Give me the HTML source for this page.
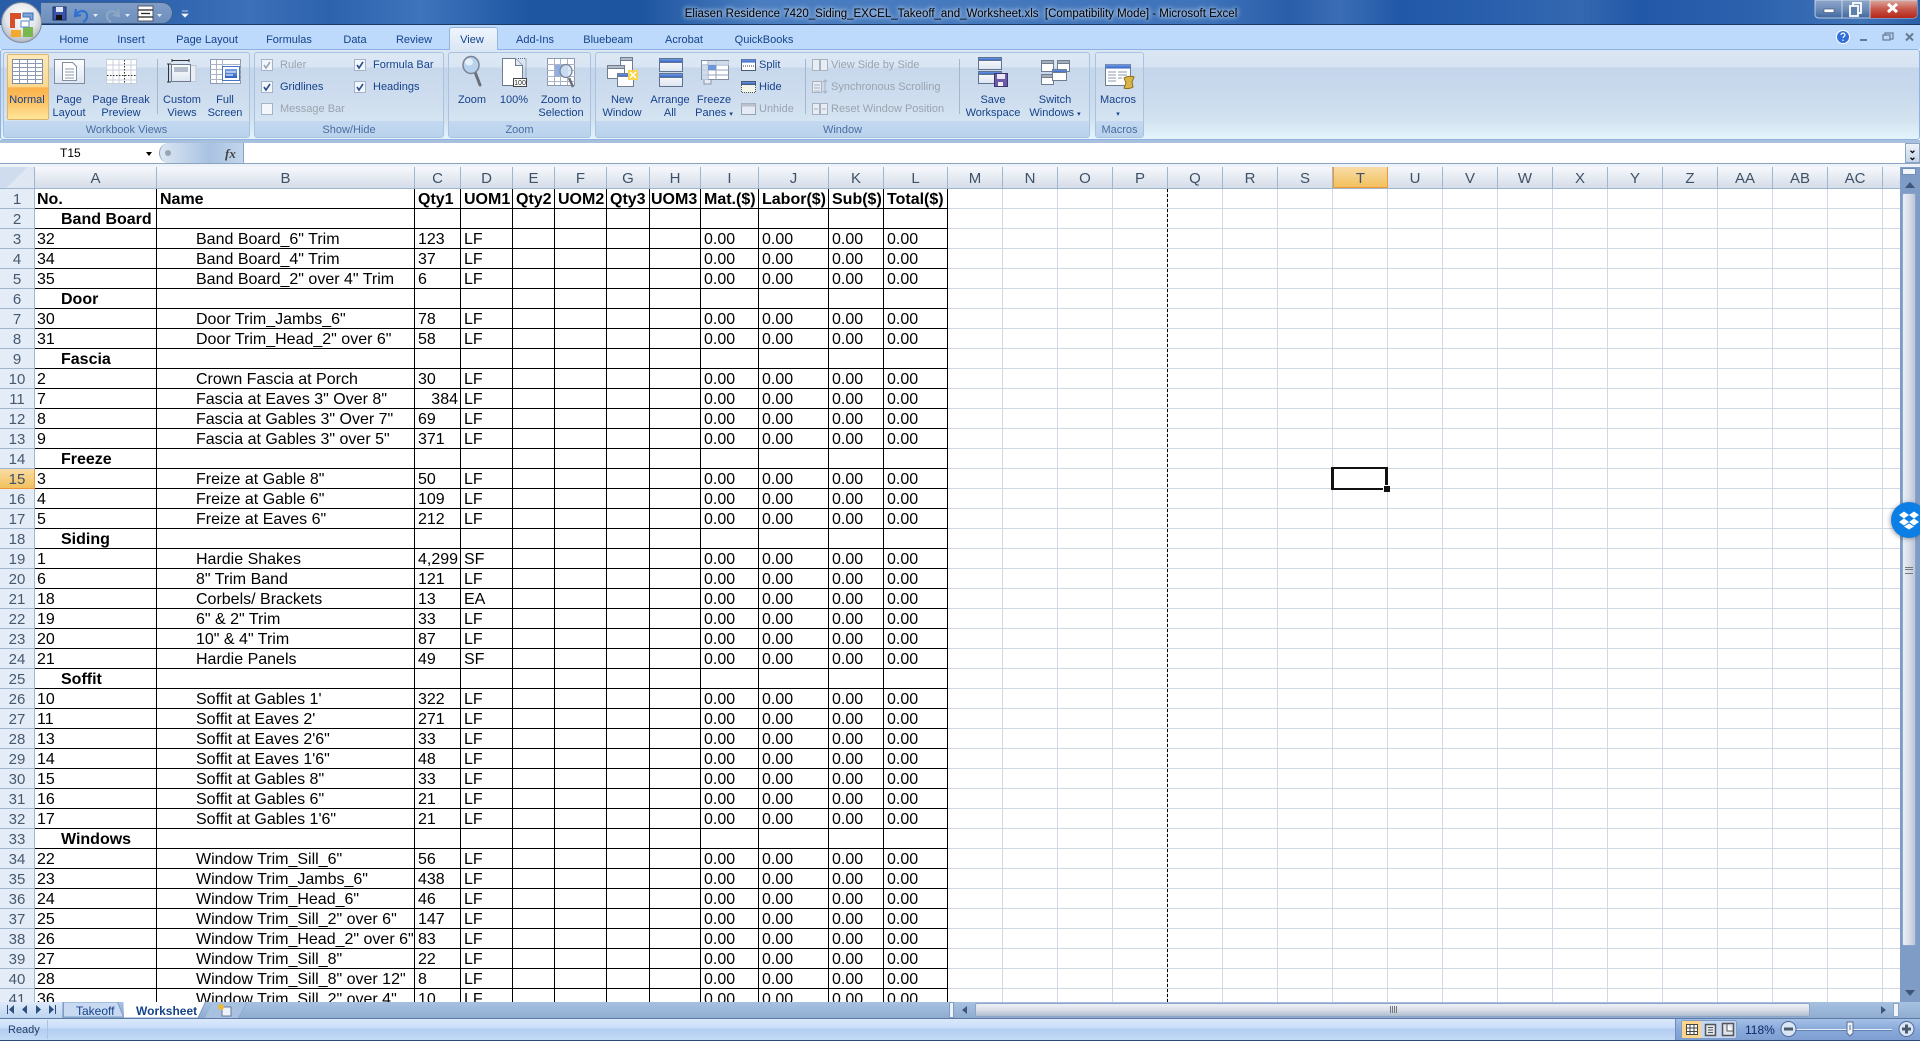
<!DOCTYPE html>
<html><head><meta charset="utf-8"><title>Excel</title>
<style>
html,body{margin:0;padding:0;background:#fff}
#p{position:relative;width:1920px;height:1041px;overflow:hidden;font-family:"Liberation Sans",sans-serif;font-size:11px;color:#15428b}
.a{position:absolute}
.l{position:absolute;transform:translateX(-50%);text-align:center;line-height:13px;white-space:nowrap;margin-top:1px}
.x{position:absolute;line-height:13px;white-space:nowrap;margin-top:1px}
.d{color:#9aa3af}
.g{position:absolute;top:52px;height:84px;border:1px solid #a9c2de;border-radius:3px;background:rgba(255,255,255,.08);box-sizing:content-box}
.gl{position:absolute;left:0;right:0;bottom:0;height:16px;background:linear-gradient(#c4d9f1,#b9d2ec);color:#4a6da0;text-align:center;line-height:18px}
#ch{position:absolute;left:0;top:167px;height:21px;width:1900px;overflow:hidden;display:flex;background:linear-gradient(#f6f8fc,#d5dde9);border-top:0;border-bottom:1px solid #9eb6ce}
#ch span{display:block;flex:none;box-sizing:border-box;height:21px;border-right:1px solid #9eb6ce;text-align:center;font-size:15px;line-height:23px;color:#3f5166}
#ch .o{background:linear-gradient(#f9dca6,#f1c15c);border-right:1px solid #f29536;border-left:1px solid #f29536;border-bottom:1px solid #f29536;color:#3f5166}
#rh{position:absolute;left:0;top:189px;width:35px;height:813px;overflow:hidden}
#rh div{box-sizing:border-box;height:20px;width:35px;background:#e4ecf7;border-right:1px solid #9eb6ce;border-bottom:1px solid #9eb6ce;text-align:center;font-size:15px;line-height:22px;color:#46586e}
#rh .o{background:linear-gradient(#f9dca6,#f1c15c);color:#3f5166;border-right:1px solid #f29536;border-bottom:1px solid #f29536}
#gr{position:absolute;left:948px;top:189px;width:952px;height:813px;background-image:repeating-linear-gradient(90deg,transparent 0 54px,#d0d7e5 54px 55px),repeating-linear-gradient(180deg,transparent 0 19px,#d0d7e5 19px 20px)}
#tw{position:absolute;left:35px;top:189px;width:913px;height:813px;overflow:hidden}
table{border-collapse:separate;border-spacing:0;table-layout:fixed;width:913px;font-size:16px;color:#000}
td{box-sizing:border-box;height:20px;padding:2px 0 0 3px;border-right:1px solid #000;border-bottom:1px solid #000;white-space:nowrap;overflow:hidden;line-height:17px;vertical-align:top}
.n{padding-left:39px}.s{padding-left:26px;font-weight:bold}.b{font-weight:bold}.r{text-align:right;padding-right:2px}
tr td:first-child{padding-left:2px}tr td.s:first-child{padding-left:26px}
</style></head><body><div id="p">

<!-- title bar -->
<div class="a" style="left:0;top:0;width:1920px;height:24px;background:linear-gradient(90deg,#2a5da8 0,#2b60ab 130px,#3c70b8 250px,#2d62ad 330px,#3e74bb 420px,#1f56a2 530px,#1e55a0 640px,#4a7dc0 760px,#3f73ba 1200px,#2a5ea9 1290px,#3a6db4 1340px,#2158a8 1400px,#2a60ad 1500px,#3468b0 1580px,#2258a8 1640px,#2d62ae 1760px,#3f74b8 1860px,#2a5fa8 1920px)"></div>
<div class="a" style="left:0;top:24px;width:1920px;height:1px;background:#1b3a63"></div>
<div class="a" style="left:41px;top:2px;width:132px;height:22px;border-radius:0 12px 12px 0;background:linear-gradient(#7f9dc6,#6d8fbd);border:1px solid #3d5f90;border-left:0;box-sizing:border-box"></div>
<div class="x" style="left:961px;top:7px;transform:translateX(-50%);font-size:11.5px;color:#000;text-shadow:0 0 4px #dbe8f8,0 0 6px #dbe8f8">Eliasen Residence 7420_Siding_EXCEL_Takeoff_and_Worksheet.xls &nbsp;[Compatibility Mode] - Microsoft Excel</div>

<!-- tab strip -->
<div class="a" style="left:0;top:25px;width:1920px;height:24px;background:#bdd9fc"></div>
<!-- ribbon -->
<div class="a" style="left:0;top:49px;width:1920px;height:91px;box-sizing:border-box;border:1px solid #8db2e3;border-radius:3px;background:linear-gradient(#dbe6f4 0,#d6e3f2 17px,#c4d5eb 18px,#c9daed 45px,#d2e2f0 70px,#e2f3fc 88px)"></div>
<div class="a" style="left:0;top:140px;width:1920px;height:3px;background:#a8c0dc"></div>
<div class="a" style="left:449px;top:27px;width:49px;height:23px;box-sizing:border-box;border:1px solid #93b5e0;border-bottom:0;border-radius:3px 3px 0 0;background:linear-gradient(#eef5fd,#dce7f5)"></div>
<div class="l" style="left:74px;top:33px">Home</div>
<div class="l" style="left:131px;top:33px">Insert</div>
<div class="l" style="left:207px;top:33px">Page Layout</div>
<div class="l" style="left:289px;top:33px">Formulas</div>
<div class="l" style="left:355px;top:33px">Data</div>
<div class="l" style="left:414px;top:33px">Review</div>
<div class="l" style="left:472px;top:33px">View</div>
<div class="l" style="left:535px;top:33px">Add-Ins</div>
<div class="l" style="left:608px;top:33px">Bluebeam</div>
<div class="l" style="left:684px;top:33px">Acrobat</div>
<div class="l" style="left:764px;top:33px">QuickBooks</div>

<!-- groups -->
<div class="g" style="left:3px;width:245px"><div class="gl">Workbook Views</div></div>
<div class="g" style="left:254px;width:188px"><div class="gl">Show/Hide</div></div>
<div class="g" style="left:448px;width:141px"><div class="gl">Zoom</div></div>
<div class="g" style="left:595px;width:493px"><div class="gl">Window</div></div>
<div class="g" style="left:1095px;width:47px"><div class="gl">Macros</div></div>
<div class="a" style="left:7px;top:54px;width:42px;height:66px;box-sizing:border-box;border:1px solid #e0b36a;border-radius:2px;background:linear-gradient(#fde9b8 0,#fbd88e 50%,#fbb14a 51%,#fcc468 75%,#fee79a 100%)"></div>

<!-- ribbon labels -->
<div class="l" style="left:27px;top:93px">Normal</div>
<div class="l" style="left:69px;top:93px">Page<br>Layout</div>
<div class="l" style="left:121px;top:93px">Page Break<br>Preview</div>
<div class="l" style="left:182px;top:93px">Custom<br>Views</div>
<div class="l" style="left:225px;top:93px">Full<br>Screen</div>
<div class="x d" style="left:280px;top:58px">Ruler</div>
<div class="x" style="left:280px;top:80px">Gridlines</div>
<div class="x d" style="left:280px;top:102px">Message Bar</div>
<div class="x" style="left:373px;top:58px">Formula Bar</div>
<div class="x" style="left:373px;top:80px">Headings</div>
<div class="l" style="left:472px;top:93px">Zoom</div>
<div class="l" style="left:514px;top:93px">100%</div>
<div class="l" style="left:561px;top:93px">Zoom to<br>Selection</div>
<div class="l" style="left:622px;top:93px">New<br>Window</div>
<div class="l" style="left:670px;top:93px">Arrange<br>All</div>
<div class="l" style="left:714px;top:93px">Freeze<br>Panes <span style="font-size:7px">▾</span></div>
<div class="x" style="left:759px;top:58px">Split</div>
<div class="x" style="left:759px;top:80px">Hide</div>
<div class="x d" style="left:759px;top:102px">Unhide</div>
<div class="x d" style="left:831px;top:58px">View Side by Side</div>
<div class="x d" style="left:831px;top:80px">Synchronous Scrolling</div>
<div class="x d" style="left:831px;top:102px">Reset Window Position</div>
<div class="l" style="left:993px;top:93px">Save<br>Workspace</div>
<div class="l" style="left:1055px;top:93px">Switch<br>Windows <span style="font-size:7px">▾</span></div>
<div class="l" style="left:1118px;top:93px">Macros<br><span style="font-size:7px">▾</span></div>

<!-- icons -->
<svg class="a" style="left:0;top:0" width="1920" height="141" viewBox="0 0 1920 141">
<defs>
<radialGradient id="ob" cx=".5" cy=".35" r=".7"><stop offset="0" stop-color="#ffffff"/><stop offset=".55" stop-color="#e3e6ea"/><stop offset="1" stop-color="#a7afb9"/></radialGradient>
<linearGradient id="pg" x1="0" y1="0" x2="0" y2="1"><stop offset="0" stop-color="#fff"/><stop offset="1" stop-color="#dde5f1"/></linearGradient>
<linearGradient id="bl" x1="0" y1="0" x2="0" y2="1"><stop offset="0" stop-color="#7aa3e6"/><stop offset="1" stop-color="#2f5fc4"/></linearGradient>
<linearGradient id="cl" x1="0" y1="0" x2="0" y2="1"><stop offset="0" stop-color="#dba79b"/><stop offset=".5" stop-color="#c8564a"/><stop offset="1" stop-color="#b5261a"/></linearGradient>
<linearGradient id="wb" x1="0" y1="0" x2="0" y2="1"><stop offset="0" stop-color="#8ea7cc"/><stop offset=".5" stop-color="#6f8cb8"/><stop offset="1" stop-color="#3f679f"/></linearGradient>
</defs>
<!-- office button -->
<circle cx="21.5" cy="22.5" r="20" fill="url(#ob)" stroke="#7f8a99"/>
<path d="M10 13h11v6h-6v9h-5z" fill="#d8502a"/><path d="M23 13h10v7h-3v-3h-7z" fill="#7ea6d8" stroke="#3d72b8"/>
<path d="M11 30h10v7h-10z" fill="#f3a92c"/><path d="M23 27h10v10h-10z" fill="#79b84f"/>
<rect x="21" y="21" width="8" height="6" fill="#fff" stroke="#5b8ac8"/>
<!-- QAT -->
<rect x="53" y="7" width="13" height="13" fill="#3b53a8" stroke="#1e2f6e"/><rect x="56" y="7" width="7" height="5" fill="#dfe6f5"/><rect x="56" y="15" width="6" height="5" fill="#111"/>
<path d="M76 9l-1 7 6-1M76 15c3-6 12-5 11 2-.3 2-2 4-4 5" fill="none" stroke="#2f6fd0" stroke-width="2.2"/>
<path d="M93 14h5l-2.500 3z" fill="#e6edf7"/>
<path d="M118 9l1 7-6-1M118 15c-3-6-12-5-11 2 .3 2 2 4 4 5" fill="none" stroke="#8ea6c6" stroke-width="2.200"/>
<path d="M125 14h5l-2.500 3z" fill="#e6edf7"/>
<rect x="138" y="6" width="15" height="15" fill="#fff" stroke="#556"/><path d="M138 10h15M138 17h15M141 13.500h9" stroke="#222" stroke-width="1.300"/>
<path d="M157 14h5l-2.500 3z" fill="#e6edf7"/>
<path d="M182 11h6M182 14h6l-3 3z" fill="#fff" stroke="#e8eef7" stroke-width=".8"/>
<!-- window buttons -->
<path d="M1815 0v14q0 4 4 4h94q4 0 4-4V0z" fill="url(#wb)" stroke="#e8eef7" stroke-opacity=".7"/>
<path d="M1870 .5h47v13.500q0 4-4 4h-43z" fill="url(#cl)"/>
<path d="M1842 0v18M1870 0v18" stroke="#e8eef7" stroke-opacity=".7"/>
<rect x="1824" y="9" width="10" height="3.500" fill="#fff" stroke="#39506f" stroke-width=".6"/>
<rect x="1853" y="3" width="8" height="10" fill="none" stroke="#fff" stroke-width="1.800"/><rect x="1850" y="6" width="8" height="10" fill="#5e7fae" stroke="#fff" stroke-width="1.800"/>
<path d="M1888 4l9 8M1897 4l-9 8" stroke="#fff" stroke-width="3"/>
<!-- help etc -->
<circle cx="1843" cy="37" r="6.500" fill="#2f6fd8" stroke="#fff"/><path d="M1841 35c0-2.500 4-2.500 4 0 0 1.500-2 1.500-2 3M1843 39.500v1.500" stroke="#fff" fill="none" stroke-width="1.200"/>
<rect x="1860" y="39" width="7" height="2" fill="#667a93"/>
<rect x="1885" y="33" width="8" height="6" fill="none" stroke="#667a93" stroke-width="1.200"/><rect x="1883" y="35" width="7" height="5" fill="#bdd9fc" stroke="#667a93" stroke-width="1.200"/>
<path d="M1906 33.500l7 7M1913 33.500l-7 7" stroke="#667a93" stroke-width="2"/>
<!-- normal -->
<rect x="12.500" y="59.500" width="30" height="24" fill="#fff" stroke="#7f8ea3"/>
<path d="M12 63.500h31M12 67.500h31M12 71.500h31M12 75.500h31M12 79.500h31M19.500 60v23M27.500 60v23M35.500 60v23" stroke="#8b9ab0"/>
<!-- page layout -->
<rect x="54.500" y="59.500" width="30" height="24" fill="url(#pg)" stroke="#7f8ea3"/>
<path d="M62.500 62.500h10l4 4v14h-14z" fill="#fff" stroke="#7f8ea3"/><path d="M65 69h9M65 72h9M65 75h9M65 78h9" stroke="#8b9ab0"/>
<!-- page break -->
<rect x="106.500" y="59.500" width="30" height="24" fill="#fff" stroke="#c3ccd9"/>
<path d="M107 65h30M107 70h30M107 80h30M113 60v23M119 60v23M131 60v23" stroke="#c8d0dc"/>
<path d="M124.500 60v23M107 75.500h30" stroke="#333" stroke-dasharray="1.500 1.500"/>
<!-- custom views -->
<path d="M168.500 64v18M167 64h4M167 82h4M172 60.500h17M172 59v3M189 59v3" stroke="#333" fill="none"/>
<rect x="186" y="65.500" width="10" height="16" fill="#e9eef5" stroke="#bfc8d4"/>
<rect x="171.500" y="64.500" width="19" height="17" fill="url(#pg)" stroke="#6f7d92"/><rect x="174" y="67" width="14" height="5" fill="#b3bccb"/>
<!-- full screen -->
<rect x="210.500" y="59.500" width="30" height="24" fill="#fff" stroke="#8b9ab0"/>
<path d="M210 64.500h31M210 69.500h31M210 74.500h31M210 79.500h31M216.500 60v23M222.500 60v23" stroke="#a9b5c6"/>
<rect x="222.500" y="66.500" width="17" height="14" fill="#fff" stroke="#4a74c4"/><rect x="225" y="69" width="12" height="9" fill="url(#bl)"/><path d="M226 72h10M226 75h7" stroke="#fff"/>
<!-- checkboxes -->
<g fill="#f3f6fb" stroke="#a3b4c9"><rect x="261.500" y="59.500" width="11" height="11"/><rect x="261.500" y="81.500" width="11" height="11"/><rect x="261.500" y="103.500" width="11" height="11"/><rect x="354.500" y="59.500" width="11" height="11"/><rect x="354.500" y="81.500" width="11" height="11"/></g>
<g fill="none" stroke-width="1.600"><path d="M264 65l2 3 4-6" stroke="#9aa7b8"/><path d="M264 87l2 3 4-6M357 65l2 3 4-6M357 87l2 3 4-6" stroke="#2a4f8f"/></g>
<!-- zoom icons -->
<path d="M475 72l5 13" stroke="#6a6f78" stroke-width="3" stroke-linecap="round"/>
<ellipse cx="471" cy="65" rx="8" ry="8.500" fill="#b8d2ee" stroke="#7a8494" stroke-width="1.500"/><ellipse cx="469" cy="62" rx="4" ry="3.500" fill="#e6f0fa"/>
<path d="M502.500 58.500h13l7 7v20h-20z" fill="#fff" stroke="#6f7d92"/><path d="M515.500 58.500v7h7" fill="#e2e8f1" stroke="#6f7d92"/>
<path d="M518 58.500h8v27h-23" fill="none" stroke="#667" stroke-dasharray="1 1"/>
<rect x="513.500" y="78.500" width="13" height="8" fill="#fff" stroke="#444"/><text x="520" y="85" font-size="7" text-anchor="middle" fill="#222" font-family="Liberation Sans,sans-serif">100</text>
<rect x="547.500" y="58.500" width="27" height="27" fill="#fff" stroke="#8b9ab0"/>
<path d="M547 64.500h28M547 70.500h28M547 76.500h28M547 81.500h28M554.500 59v26M560.500 59v26M567.500 59v26" stroke="#a9b5c6"/>
<rect x="555" y="65" width="12" height="11" fill="#90aee2"/>
<path d="M569 78l4 9" stroke="#6a6f78" stroke-width="2.500"/><ellipse cx="566" cy="71" rx="6" ry="6.500" fill="#d4e6f7" fill-opacity=".8" stroke="#7a8494" stroke-width="1.300"/>
<!-- new window -->
<g stroke="#6f7d92"><rect x="620.500" y="57.500" width="12" height="16" fill="#fff"/><rect x="620.500" y="57.500" width="12" height="3" fill="#b6bcc6"/><rect x="607.500" y="65.500" width="17" height="13" fill="#fff"/><rect x="607.500" y="65.500" width="17" height="3" fill="#b6bcc6"/><rect x="617.500" y="73.500" width="16" height="13" fill="#fff"/><rect x="617.500" y="73.500" width="16" height="3" fill="url(#bl)"/></g>
<rect x="628" y="70" width="10" height="10" fill="#fbd44a"/><path d="M630 72l6 6M636 72l-6 6" stroke="#fff" stroke-width="1.500"/>
<!-- arrange -->
<g stroke="#5f7391"><rect x="659.500" y="58.500" width="23" height="13" fill="url(#pg)"/><rect x="659.500" y="58.500" width="23" height="4" fill="url(#bl)"/><rect x="659.500" y="73.500" width="23" height="13" fill="url(#pg)"/><rect x="659.500" y="73.500" width="23" height="4" fill="url(#bl)"/></g>
<!-- freeze -->
<rect x="701.500" y="60.500" width="27" height="19" fill="#fff" stroke="#7f8ea3"/>
<path d="M701 65h28M701 70h28M701 75h28M708 61v19M716 61v19" stroke="#94a3b8"/>
<path d="M708 61h21v4h-21zM702 65h6v15h-6z" fill="#c6d3e6" fill-opacity=".8"/><rect x="708" y="65" width="8" height="5" fill="#6e96da"/>
<path d="M704 80v4h7v-4" fill="#e6ebf2" stroke="#8896aa"/>
<!-- split hide unhide -->
<rect x="741.500" y="59.500" width="14" height="11" fill="#fff" stroke="#4a5a75"/><rect x="741.500" y="59.500" width="14" height="3" fill="url(#bl)"/><path d="M743 66h11" stroke="#333" stroke-dasharray="1 1"/>
<rect x="741.500" y="81.500" width="14" height="3" fill="url(#bl)" stroke="#4a5a75"/><path d="M741.500 85v7.500h14V85" fill="#f2f6e8" stroke="#555" stroke-dasharray="1 1"/>
<rect x="741.500" y="103.500" width="14" height="11" fill="#e4ebf4" stroke="#98a3b2"/><rect x="741.500" y="103.500" width="14" height="3" fill="#b8c1cd"/>
<path d="M805.500 59v55M959.500 59v55M157.500 59v55" stroke="#a4b7cf"/>
<!-- disabled window icons -->
<g stroke="#a7b1c0" fill="#e8edf3"><rect x="812.500" y="59.500" width="7" height="11"/><rect x="820.500" y="59.500" width="7" height="11"/><rect x="812.500" y="81.500" width="9" height="11"/><rect x="812.500" y="103.500" width="7" height="11"/><rect x="820.500" y="103.500" width="7" height="11"/></g>
<path d="M814 85h6M814 88h6M814 91h6M825 80v13M823 82l2-2 2 2M823 91l2 2 2-2M814 109h4M822 109h4" stroke="#a7b1c0" fill="none"/>
<!-- save workspace -->
<g stroke="#5f7391"><rect x="978.500" y="57.500" width="23" height="12" fill="url(#pg)"/><rect x="978.500" y="57.500" width="23" height="3" fill="url(#bl)"/><rect x="978.500" y="71.500" width="23" height="12" fill="url(#pg)"/><rect x="978.500" y="71.500" width="23" height="3" fill="url(#bl)"/></g>
<rect x="994.500" y="73.500" width="13" height="13" fill="#6a5ba8" stroke="#3e3470"/><rect x="997" y="74" width="8" height="5" fill="#e8e6f2"/><rect x="998" y="82" width="5" height="4" fill="#eee"/>
<!-- switch windows -->
<g stroke="#6f7d92"><rect x="1041.500" y="60.500" width="12" height="11" fill="#fff"/><rect x="1041.500" y="60.500" width="12" height="3" fill="#a8adb6"/><rect x="1057.500" y="60.500" width="12" height="11" fill="#fff"/><rect x="1057.500" y="60.500" width="12" height="3" fill="#a8adb6"/><rect x="1041.500" y="74.500" width="12" height="10" fill="#fff"/><rect x="1041.500" y="74.500" width="12" height="3" fill="#a8adb6"/><rect x="1052.500" y="69.500" width="14" height="11" fill="#fff"/><rect x="1052.500" y="69.500" width="14" height="3" fill="url(#bl)"/></g>
<!-- macros -->
<rect x="1105.500" y="64.500" width="25" height="21" fill="#fff" stroke="#6f7d92"/><rect x="1105.500" y="64.500" width="25" height="4" fill="url(#bl)"/>
<path d="M1108 72h8M1108 75h8M1108 78h8M1108 81h8M1118 72h9M1118 75h9M1118 78h4" stroke="#8b9ab0"/>
<path d="M1124 78c3-2 8-2 10-1l-2 5 1 5c-3 2-7 2-9 1l2-5z" fill="#d9b548" stroke="#8c6d1c"/>
</svg>

<!-- formula bar -->
<div class="a" style="left:0;top:143px;width:1920px;height:20px;background:#fff"></div>
<div class="a" style="left:0;top:163px;width:1920px;height:1px;background:#8ba4c2"></div>
<div class="a" style="left:0;top:164px;width:1920px;height:3px;background:#eef3f9"></div>
<div class="a" style="left:0;top:167px;width:1920px;height:1px;background:#bcc9da"></div>
<div class="x" style="left:60px;top:146px;font-size:12px;color:#000">T15</div>
<div class="a" style="left:146px;top:152px;width:0;height:0;border:3.500px solid transparent;border-top:4px solid #000"></div>
<div class="a" style="left:159px;top:143px;width:85px;height:20px;box-sizing:border-box;border-radius:10px 0 0 10px;background:linear-gradient(90deg,#dbe6f3,#a9c2e2 60%,#c2d5ec);border-left:1px solid #8ba4c2;border-right:1px solid #8ba4c2"></div>
<div class="a" style="left:165px;top:150px;width:6px;height:6px;border-radius:50%;background:#9aa5b2"></div>
<div class="x" style="left:225px;top:146px;font-family:'Liberation Serif',serif;font-style:italic;font-weight:bold;font-size:13px;color:#444">fx</div>
<div class="a" style="left:1905px;top:143px;width:15px;height:20px;box-sizing:border-box;border:1px solid #8ba4c2;background:linear-gradient(#eef3f9,#c3d4ea);color:#000;font-size:10px;font-weight:bold;line-height:7px;text-align:center;padding-top:3px">⌄<br>⌄</div>

<!-- grid -->
<div id="gr"></div>
<div id="tw"><table>
<colgroup><col style="width:122px"><col style="width:258px"><col style="width:46px"><col style="width:52px"><col style="width:42px"><col style="width:52px"><col style="width:43px"><col style="width:51px"><col style="width:58px"><col style="width:70px"><col style="width:55px"><col style="width:64px"></colgroup>
<tr class="b"><td class="b">No.<td class="b">Name<td class="b">Qty1<td class="b">UOM1<td class="b">Qty2<td class="b">UOM2<td class="b">Qty3<td class="b" style="padding-left:1px">UOM3<td class="b">Mat.($)<td class="b">Labor($)<td class="b">Sub($)<td class="b">Total($)
<tr><td class="s">Band Board<td><td><td><td><td><td><td><td><td><td><td>
<tr><td>32<td class="n">Band Board_6" Trim<td>123<td>LF<td><td><td><td><td>0.00<td>0.00<td>0.00<td>0.00
<tr><td>34<td class="n">Band Board_4" Trim<td>37<td>LF<td><td><td><td><td>0.00<td>0.00<td>0.00<td>0.00
<tr><td>35<td class="n">Band Board_2" over 4" Trim<td>6<td>LF<td><td><td><td><td>0.00<td>0.00<td>0.00<td>0.00
<tr><td class="s">Door<td><td><td><td><td><td><td><td><td><td><td>
<tr><td>30<td class="n">Door Trim_Jambs_6"<td>78<td>LF<td><td><td><td><td>0.00<td>0.00<td>0.00<td>0.00
<tr><td>31<td class="n">Door Trim_Head_2" over 6"<td>58<td>LF<td><td><td><td><td>0.00<td>0.00<td>0.00<td>0.00
<tr><td class="s">Fascia<td><td><td><td><td><td><td><td><td><td><td>
<tr><td>2<td class="n">Crown Fascia at Porch<td>30<td>LF<td><td><td><td><td>0.00<td>0.00<td>0.00<td>0.00
<tr><td>7<td class="n">Fascia at Eaves 3" Over 8"<td class="r">384<td>LF<td><td><td><td><td>0.00<td>0.00<td>0.00<td>0.00
<tr><td>8<td class="n">Fascia at Gables 3" Over 7"<td>69<td>LF<td><td><td><td><td>0.00<td>0.00<td>0.00<td>0.00
<tr><td>9<td class="n">Fascia at Gables 3" over 5"<td>371<td>LF<td><td><td><td><td>0.00<td>0.00<td>0.00<td>0.00
<tr><td class="s">Freeze<td><td><td><td><td><td><td><td><td><td><td>
<tr><td>3<td class="n">Freize at Gable 8"<td>50<td>LF<td><td><td><td><td>0.00<td>0.00<td>0.00<td>0.00
<tr><td>4<td class="n">Freize at Gable 6"<td>109<td>LF<td><td><td><td><td>0.00<td>0.00<td>0.00<td>0.00
<tr><td>5<td class="n">Freize at Eaves 6"<td>212<td>LF<td><td><td><td><td>0.00<td>0.00<td>0.00<td>0.00
<tr><td class="s">Siding<td><td><td><td><td><td><td><td><td><td><td>
<tr><td>1<td class="n">Hardie Shakes<td>4,299<td>SF<td><td><td><td><td>0.00<td>0.00<td>0.00<td>0.00
<tr><td>6<td class="n">8" Trim Band<td>121<td>LF<td><td><td><td><td>0.00<td>0.00<td>0.00<td>0.00
<tr><td>18<td class="n">Corbels/ Brackets<td>13<td>EA<td><td><td><td><td>0.00<td>0.00<td>0.00<td>0.00
<tr><td>19<td class="n">6" &amp; 2" Trim<td>33<td>LF<td><td><td><td><td>0.00<td>0.00<td>0.00<td>0.00
<tr><td>20<td class="n">10" &amp; 4" Trim<td>87<td>LF<td><td><td><td><td>0.00<td>0.00<td>0.00<td>0.00
<tr><td>21<td class="n">Hardie Panels<td>49<td>SF<td><td><td><td><td>0.00<td>0.00<td>0.00<td>0.00
<tr><td class="s">Soffit<td><td><td><td><td><td><td><td><td><td><td>
<tr><td>10<td class="n">Soffit at Gables 1'<td>322<td>LF<td><td><td><td><td>0.00<td>0.00<td>0.00<td>0.00
<tr><td>11<td class="n">Soffit at Eaves 2'<td>271<td>LF<td><td><td><td><td>0.00<td>0.00<td>0.00<td>0.00
<tr><td>13<td class="n">Soffit at Eaves 2'6"<td>33<td>LF<td><td><td><td><td>0.00<td>0.00<td>0.00<td>0.00
<tr><td>14<td class="n">Soffit at Eaves 1'6"<td>48<td>LF<td><td><td><td><td>0.00<td>0.00<td>0.00<td>0.00
<tr><td>15<td class="n">Soffit at Gables 8"<td>33<td>LF<td><td><td><td><td>0.00<td>0.00<td>0.00<td>0.00
<tr><td>16<td class="n">Soffit at Gables 6"<td>21<td>LF<td><td><td><td><td>0.00<td>0.00<td>0.00<td>0.00
<tr><td>17<td class="n">Soffit at Gables 1'6"<td>21<td>LF<td><td><td><td><td>0.00<td>0.00<td>0.00<td>0.00
<tr><td class="s">Windows<td><td><td><td><td><td><td><td><td><td><td>
<tr><td>22<td class="n">Window Trim_Sill_6"<td>56<td>LF<td><td><td><td><td>0.00<td>0.00<td>0.00<td>0.00
<tr><td>23<td class="n">Window Trim_Jambs_6"<td>438<td>LF<td><td><td><td><td>0.00<td>0.00<td>0.00<td>0.00
<tr><td>24<td class="n">Window Trim_Head_6"<td>46<td>LF<td><td><td><td><td>0.00<td>0.00<td>0.00<td>0.00
<tr><td>25<td class="n">Window Trim_Sill_2" over 6"<td>147<td>LF<td><td><td><td><td>0.00<td>0.00<td>0.00<td>0.00
<tr><td>26<td class="n">Window Trim_Head_2" over 6"<td>83<td>LF<td><td><td><td><td>0.00<td>0.00<td>0.00<td>0.00
<tr><td>27<td class="n">Window Trim_Sill_8"<td>22<td>LF<td><td><td><td><td>0.00<td>0.00<td>0.00<td>0.00
<tr><td>28<td class="n">Window Trim_Sill_8" over 12"<td>8<td>LF<td><td><td><td><td>0.00<td>0.00<td>0.00<td>0.00
<tr><td>36<td class="n">Window Trim_Sill_2" over 4"<td>10<td>LF<td><td><td><td><td>0.00<td>0.00<td>0.00<td>0.00
</table></div>
<div class="a" style="left:1167px;top:189px;height:813px;width:0;border-left:1px dashed #000"></div>
<div class="a" style="left:1331px;top:467px;width:57px;height:23px;box-sizing:border-box;border:solid #111;border-width:2px 3px"></div>
<div class="a" style="left:1384px;top:486px;width:6px;height:6px;background:#111;box-shadow:-1px -1px 0 #fff"></div>

<!-- column headers -->
<div id="ch">
<span style="width:35px;background:linear-gradient(135deg,#cfdcee 50%,#dfe7f2 50%)"></span><span style="width:122px">A</span><span style="width:258px">B</span><span style="width:46px">C</span><span style="width:52px">D</span><span style="width:42px">E</span><span style="width:52px">F</span><span style="width:43px">G</span><span style="width:51px">H</span><span style="width:58px">I</span><span style="width:70px">J</span><span style="width:55px">K</span><span style="width:64px">L</span><span style="width:55px">M</span><span style="width:55px">N</span><span style="width:55px">O</span><span style="width:55px">P</span><span style="width:55px">Q</span><span style="width:55px">R</span><span style="width:55px">S</span><span class="o" style="width:55px">T</span><span style="width:55px">U</span><span style="width:55px">V</span><span style="width:55px">W</span><span style="width:55px">X</span><span style="width:55px">Y</span><span style="width:55px">Z</span><span style="width:55px">AA</span><span style="width:55px">AB</span><span style="width:55px">AC</span><span style="width:55px">AD</span>
</div>
<!-- row headers -->
<div id="rh"><div>1</div><div>2</div><div>3</div><div>4</div><div>5</div><div>6</div><div>7</div><div>8</div><div>9</div><div>10</div><div>11</div><div>12</div><div>13</div><div>14</div><div class="o">15</div><div>16</div><div>17</div><div>18</div><div>19</div><div>20</div><div>21</div><div>22</div><div>23</div><div>24</div><div>25</div><div>26</div><div>27</div><div>28</div><div>29</div><div>30</div><div>31</div><div>32</div><div>33</div><div>34</div><div>35</div><div>36</div><div>37</div><div>38</div><div>39</div><div>40</div><div>41</div></div>

<!-- vertical scrollbar -->
<div class="a" style="left:1900px;top:167px;width:20px;height:835px;background:#7f9cc6"></div>
<div class="a" style="left:1902px;top:168px;width:14px;height:7px;box-sizing:border-box;background:#f2f6fb;border:1px solid #6f8db8"></div>
<div class="a" style="left:1905px;top:182px;width:0;height:0;border:5px solid transparent;border-bottom:6px solid #3f5678;border-top:0"></div>
<div class="a" style="left:1902px;top:193px;width:14px;height:753px;box-sizing:border-box;background:linear-gradient(90deg,#ebeff6,#d8dee9,#bcc6d6);border:1px solid #8ba4c8;border-radius:2px"></div>
<div class="a" style="left:1905px;top:567px;width:8px;height:5px;border-top:1px solid #777;border-bottom:1px solid #777"></div>
<div class="a" style="left:1905px;top:569px;width:8px;height:1px;background:#777"></div>
<div class="a" style="left:1905px;top:990px;width:0;height:0;border:5px solid transparent;border-top:6px solid #3f5678;border-bottom:0"></div>

<!-- dropbox -->
<svg class="a" style="left:1888px;top:500px;filter:drop-shadow(-1px 1px 2px rgba(0,0,0,.35))" width="32" height="40" viewBox="0 0 32 40"><ellipse cx="21" cy="20" rx="18" ry="18" fill="#0b7fe5"/><path d="M16 11.500l5 3.500-5 3.500-5-3.500zM26 11.500l5 3.500-5 3.500-5-3.500zM16 18.500l5 3.500-5 3.500-5-3.500zM26 18.500l5 3.500-5 3.500-5-3.500zM21 23.500l5 3-5 3-5-3z" fill="#fff"/></svg>

<!-- sheet tabs -->
<div class="a" style="left:0;top:1002px;width:1920px;height:16px;background:linear-gradient(#a7c1e2,#8faccf)"></div>
<div class="a" style="left:0;top:1002px;width:62px;height:16px;background:linear-gradient(#dfeafa,#bdd4f0)"></div>
<svg class="a" style="left:0;top:1002px" width="260" height="17" viewBox="0 0 260 17">
<path d="M7 3h1v9H7zM14 3l-5 4.500 5 4.500zM27 3l-5 4.500 5 4.500zM36 3l5 4.500-5 4.500zM49 3l5 4.500-5 4.500zM55 3h1v9h-1z" fill="#2d4f80"/>
<path d="M63.500 0v15h60l-6-15z" fill="#c7daf2" stroke="#7f9cc6"/>
<path d="M124 16l-.5-16h82l-8 16z" fill="#fff"/><path d="M124 16h74l7.500-16" fill="none" stroke="#7f9cc6"/>
<path d="M205 16h33l9-16" fill="#c7d9ef" stroke="#7f9cc6"/><path d="M205 16l8-16h34l-9 16z" fill="#a8c1e1"/>
<rect x="222" y="5" width="9" height="9" fill="#eef3f9" stroke="#67799a"/><circle cx="221" cy="5" r="3" fill="#e9b93d"/>
</svg>
<div class="x" style="left:76px;top:1004px;font-size:12px">Takeoff</div>
<div class="x" style="left:136px;top:1004px;font-size:12px;font-weight:bold">Worksheet</div>
<!-- h scrollbar -->
<div class="a" style="left:949px;top:1002px;width:5px;height:16px;box-sizing:border-box;background:#eef3f9;border:1px solid #7f9cc6"></div>
<div class="a" style="left:962px;top:1006px;width:0;height:0;border:4.500px solid transparent;border-right:5px solid #3f5678;border-left:0"></div>
<div class="a" style="left:975px;top:1003px;width:835px;height:14px;box-sizing:border-box;background:linear-gradient(#eef1f6,#d9dee8,#aebbcf);border:1px solid #8ba4c8;border-radius:2px"></div>
<div class="a" style="left:1390px;top:1006px;width:7px;height:7px;background:repeating-linear-gradient(90deg,#777 0 1px,transparent 1px 2px)"></div>
<div class="a" style="left:1881px;top:1006px;width:0;height:0;border:4.500px solid transparent;border-left:5px solid #3f5678;border-right:0"></div>
<div class="a" style="left:1893px;top:1003px;width:6px;height:14px;box-sizing:border-box;background:#f2f6fb;border:1px solid #8ba4c8"></div>
<div class="a" style="left:0;top:1018px;width:1920px;height:1px;background:#5a7ba8"></div>

<!-- status bar -->
<div class="a" style="left:0;top:1019px;width:1920px;height:21px;background:linear-gradient(#dbe9fa 0,#c9defa 40%,#b3cdf0 50%,#c3dbf6 100%)"></div>
<div class="a" style="left:0;top:1040px;width:1920px;height:1px;background:#2b4a78"></div>
<div class="x" style="left:8px;top:1023px;color:#243e66">Ready</div>
<div class="a" style="left:47px;top:1020px;width:1px;height:19px;background:#a9c2e0"></div>
<div class="a" style="left:1675px;top:1019px;width:245px;height:21px;background:linear-gradient(#a5c0e6 0,#88a9da 50%,#7f9fd2 100%);border-left:1px solid #6f8db8;box-sizing:border-box"></div>
<svg class="a" style="left:1675px;top:1019px" width="245" height="21" viewBox="0 0 245 21">
<rect x="6.500" y="1.500" width="55" height="18" rx="2" fill="#c4d8f3" stroke="#7f9cc6"/>
<rect x="7" y="2" width="19" height="17" fill="#fcd58a"/>
<rect x="11.500" y="5.500" width="11" height="10" fill="#fff" stroke="#444"/><path d="M11 9h12M11 12.500h12M15 5v10M19 5v10" stroke="#444"/>
<rect x="30.500" y="5.500" width="10" height="11" fill="#dfe5ee" stroke="#555" stroke-width="1.500"/><path d="M33 8.500h5M33 11h5M33 13.500h5" stroke="#555"/>
<rect x="47.500" y="4.500" width="11" height="12" fill="#dfe5ee" stroke="#555" stroke-width="1.500"/><path d="M52 5v7h6" fill="#fff" stroke="#555"/>
<path d="M113 10.500h104" stroke="#e9f0fa" stroke-width="1"/><path d="M113 11.500h104" stroke="#5f7fb0"/>
<circle cx="113.500" cy="10" r="7.500" fill="#dbe6f5" stroke="#4c6a98"/><rect x="109" y="8.500" width="9" height="3" fill="#4c5a70"/>
<circle cx="231.500" cy="10" r="7.500" fill="#dbe6f5" stroke="#4c6a98"/><path d="M227 8.500h3v-3h3v3h3v3h-3v3h-3v-3h-3z" fill="#4c5a70"/>
<path d="M172 3h6v11l-3 3-3-3z" fill="#eef3fa" stroke="#5a6f90"/><path d="M175 6v5" stroke="#5a6f90"/>
</svg>
<div class="x" style="left:1745px;top:1023px;font-size:12px;color:#14296b">118%</div>
</div></body></html>
